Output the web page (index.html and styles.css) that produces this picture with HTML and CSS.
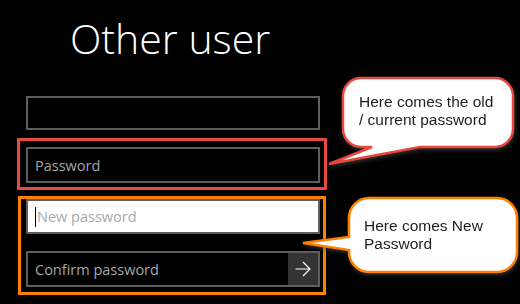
FILE: index.html
```html
<!DOCTYPE html>
<html lang="en">

<head>
    <meta charset="UTF-8" />
    <title>Other user</title>
    <link rel="stylesheet" href="styles.css">
</head>

<body>

    <div class="login">
        <h1 class="title">Other user</h1>

        <div class="field field-user"></div>

        <div class="group group-old">
            <div class="field"><span class="hint">Password</span></div>
        </div>

        <div class="group group-new">
            <div class="field field-active"><span class="caret"></span><span class="hint">New password</span></div>
            <div class="field field-confirm">
                <span class="hint">Confirm password</span>
                <span class="go">
                    <svg width="16" height="16" viewBox="0 0 16 16">
                        <path d="M0.5 8 H15 M8 1 L15 8 L8 15" fill="none" stroke="#fff" stroke-width="1.2" />
                    </svg>
                </span>
            </div>
        </div>
    </div>

    <!-- callouts -->
    <div class="callout callout-old">
        <svg width="192" height="92" viewBox="0 0 192 92">
            <path d="M35 2 H170 A18 18 0 0 1 188 20 V53 A18 18 0 0 1 170 71 H95 L4 88 L47 71 H36 A18 18 0 0 1 18 53 V20 A18 18 0 0 1 35 2 Z"
                fill="#fff" stroke="#e8473d" stroke-width="2.5" />
        </svg>
        <p>Here comes the old<br>/ current password</p>
    </div>

    <div class="callout callout-new">
        <svg width="220" height="80" viewBox="0 0 220 80">
            <path d="M69 3 H197 A20 20 0 0 1 217 23 V57 A20 20 0 0 1 197 77 H69 A20 20 0 0 1 49 57 V55 L3 48 L49 42 V23 A20 20 0 0 1 69 3 Z"
                fill="#fff" stroke="#ff8000" stroke-width="2.5" />
        </svg>
        <p>Here comes New<br>Password</p>
    </div>

</body>

</html>
```

FILE: styles.css
```css
body {
    margin: 0;
    background: #000;
    width: 520px;
    height: 304px;
    overflow: hidden;
    position: relative;
    font-family: "Open Sans", "Noto Sans", sans-serif;
}

.login {
    display: flex;
    flex-direction: column;
    padding-top: 12px;
}

.title {
    margin: 0 0 0 70px;
    color: #fff;
    font-weight: 300;
    font-size: 41px;
    line-height: 52px;
    height: 84px;
}

.field {
    box-sizing: border-box;
    width: 294px;
    height: 36px;
    border: 2px solid #5e5e5e;
    background: #000;
    display: flex;
    align-items: center;
    padding-left: 7px;
    font-size: 14.5px;
    position: relative;
}

.field-user {
    margin-left: 26px;
    height: 34px;
}

.hint {
    color: #a6a6a6;
}

.group {
    box-sizing: border-box;
    width: 310px;
    border: 3px solid;
}

.group-old {
    margin: 8px 0 0 17px;
    border-color: #e84a3f;
    padding: 6px 3px 3px 6px;
    height: 52px;
}

.group-new {
    margin: 6px 0 0 18px;
    width: 308px;
    border-color: #ff8000;
    padding: 0 3px 5px 5px;
    display: flex;
    flex-direction: column;
    gap: 17px;
}

.field-active {
    background: #fff;
    height: 35px;
}

.field-active .hint {
    color: #a9a9a9;
}

.caret {
    width: 1px;
    height: 20px;
    background: #000;
    margin-right: 1px;
}

.field-confirm {
    padding-right: 0;
}

.go {
    position: absolute;
    right: 0;
    top: 0;
    bottom: 0;
    width: 30px;
    background: #333;
    display: flex;
    align-items: center;
    justify-content: center;
}

.callout {
    position: absolute;
    filter: drop-shadow(1px 2px 2px rgba(80, 80, 80, 0.6));
}

.callout svg {
    display: block;
}

.callout p {
    position: absolute;
    margin: 0;
    font-family: "Liberation Sans", Arial, sans-serif;
    font-size: 15.5px;
    line-height: 18px;
    color: #1e1e1e;
}

.callout-old {
    left: 325px;
    top: 76px;
}

.callout-old p {
    left: 34px;
    top: 17px;
}

.callout-new {
    left: 300px;
    top: 195px;
}

.callout-new p {
    left: 64px;
    top: 22px;
}
```
